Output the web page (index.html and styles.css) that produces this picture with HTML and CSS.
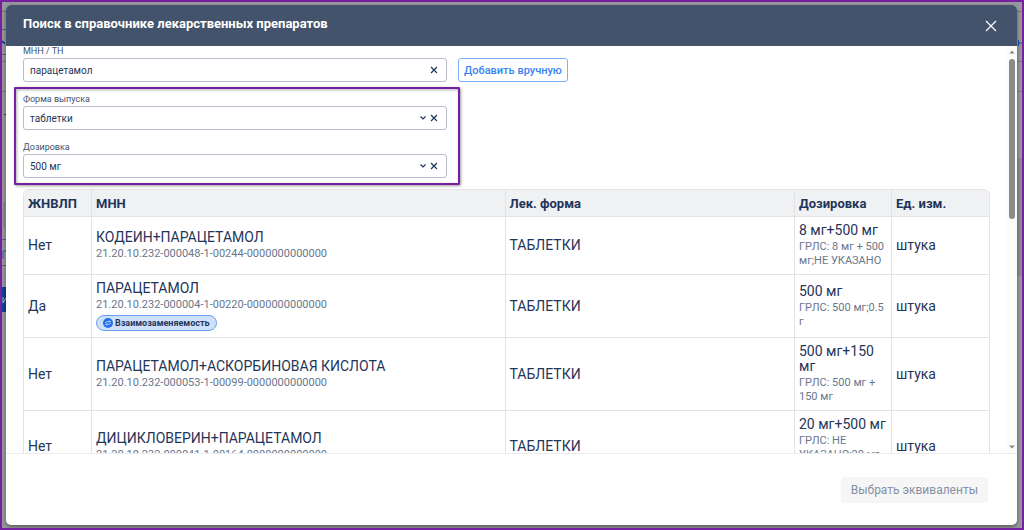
FILE: index.html
```html
<!DOCTYPE html>
<html lang="ru">
<head>
    <meta charset="utf-8">
    <meta name="viewport" content="width=device-width, initial-scale=1.0">
    <title>Поиск в справочнике лекарственных препаратов</title>
    <link rel="stylesheet" href="styles.css">
</head>
<body>
    <!-- края страницы под затемнением -->
    <svg class="page_edge page_edge_left" width="4" height="526" aria-hidden="true">
        <path d="M0 9.500H4M0 59.500H4M0 89.500H4" stroke="#77777c"/>
        <path d="M0 27.500H4M0 52.500H4M0 237.500H4M0 263.500H4" stroke="#4a6794"/>
        <path d="M0 39Q1 41 3 41" stroke="#1b4a9c" stroke-width="2" fill="none"/>
        <path d="M4 200.500H3Q2 201 2 203V223Q2 226 4 226" stroke="#77777c" fill="none"/>
        <path d="M2 112.500H4" stroke="#303a55"/>
        <path d="M1 257V249H4" stroke="#2b5da5" fill="none"/>
        <rect y="285" width="4" height="25" fill="#123f96"/>
        <path d="M1 295V301L4 296" stroke="#aab4c8" fill="none"/>
    </svg>
    <svg class="page_edge page_edge_right" width="5" height="526" aria-hidden="true">
        <path d="M0 9.500H5M0 59.500H5M0 89.500H5" stroke="#77777c"/>
        <path d="M1.500 38V44M1 41H5" stroke="#1b4a9c" stroke-width="1"/>
        <rect y="156" width="5" height="118" fill="#000" opacity="0.080"/>
    </svg>

    <div class="dialog" role="dialog" aria-labelledby="title">
        <header class="dialog_header">
            <h1 id="title">Поиск в справочнике лекарственных препаратов</h1>
            <button type="button" class="icon_button close" aria-label="Закрыть">
                <svg width="12" height="12" viewBox="0 0 12 12"><path d="M1 1L11 11M11 1L1 11"/></svg>
            </button>
        </header>

        <div class="dialog_body">
            <div class="content">
                <form class="filters">
                    <div class="search_row">
                        <div class="field">
                            <label for="mnn">МНН / ТН</label>
                            <div class="field_box">
                                <input type="text" id="mnn" value="парацетамол">
                                <button type="button" class="icon_button" aria-label="Очистить">
                                    <svg width="8" height="8" viewBox="0 0 8 8"><path d="M1 1L7 7M7 1L1 7"/></svg>
                                </button>
                            </div>
                        </div>
                        <button type="button" class="add_button">Добавить вручную</button>
                    </div>
                    <div class="highlight">
                        <div class="field">
                            <label for="form">Форма выпуска</label>
                            <div class="field_box">
                                <select id="form"><option>таблетки</option></select>
                                <svg class="chevron" width="6" height="4" viewBox="0 0 6 4"><path d="M0.500 0.500L3 3L5.500 0.500"/></svg>
                                <button type="button" class="icon_button" aria-label="Очистить">
                                    <svg width="8" height="8" viewBox="0 0 8 8"><path d="M1 1L7 7M7 1L1 7"/></svg>
                                </button>
                            </div>
                        </div>
                        <div class="field">
                            <label for="dose">Дозировка</label>
                            <div class="field_box">
                                <select id="dose"><option>500 мг</option></select>
                                <svg class="chevron" width="6" height="4" viewBox="0 0 6 4"><path d="M0.500 0.500L3 3L5.500 0.500"/></svg>
                                <button type="button" class="icon_button" aria-label="Очистить">
                                    <svg width="8" height="8" viewBox="0 0 8 8"><path d="M1 1L7 7M7 1L1 7"/></svg>
                                </button>
                            </div>
                        </div>
                    </div>
                </form>

                <table>
                    <thead>
                        <tr>
                            <th class="col_vital">ЖНВЛП</th>
                            <th>МНН</th>
                            <th class="col_form">Лек. форма</th>
                            <th class="col_dose">Дозировка</th>
                            <th class="col_unit">Ед. изм.</th>
                        </tr>
                    </thead>
                    <tbody>
                        <tr>
                            <td>Нет</td>
                            <td>КОДЕИН+ПАРАЦЕТАМОЛ<small>21.20.10.232-000048-1-00244-0000000000000</small></td>
                            <td>ТАБЛЕТКИ</td>
                            <td>8 мг+500 мг<small>ГРЛС: 8 мг + 500 мг;НЕ УКАЗАНО</small></td>
                            <td>штука</td>
                        </tr>
                        <tr>
                            <td>Да</td>
                            <td>ПАРАЦЕТАМОЛ<small>21.20.10.232-000004-1-00220-0000000000000</small>
                                <span class="badge">
                                    <svg width="10" height="10" viewBox="0 0 10 10">
                                        <circle cx="5" cy="5" r="5" fill="#1f6fee"/>
                                        <path d="M2.500 5Q3 3.700 4.300 3.700H7.500L6.300 2.600M7.500 5Q7 6.300 5.700 6.300H2.500L3.700 7.400" fill="none" stroke="#cfe0fb" stroke-width="0.900"/>
                                    </svg>
                                    Взаимозаменяемость
                                </span>
                            </td>
                            <td>ТАБЛЕТКИ</td>
                            <td>500 мг<small>ГРЛС: 500 мг;0.5 г</small></td>
                            <td>штука</td>
                        </tr>
                        <tr>
                            <td>Нет</td>
                            <td>ПАРАЦЕТАМОЛ+АСКОРБИНОВАЯ КИСЛОТА<small>21.20.10.232-000053-1-00099-0000000000000</small></td>
                            <td>ТАБЛЕТКИ</td>
                            <td>500 мг+150 мг<small>ГРЛС: 500 мг + 150 мг</small></td>
                            <td>штука</td>
                        </tr>
                        <tr>
                            <td>Нет</td>
                            <td>ДИЦИКЛОВЕРИН+ПАРАЦЕТАМОЛ<small>21.20.10.232-000041-1-00164-0000000000000</small></td>
                            <td>ТАБЛЕТКИ</td>
                            <td>20 мг+500 мг<small>ГРЛС: НЕ УКАЗАНО;20 мг + 500 мг</small></td>
                            <td>штука</td>
                        </tr>
                    </tbody>
                </table>
            </div>
            <div class="scrollbar" aria-hidden="true">
                <svg width="6" height="4" viewBox="0 0 6 4"><path d="M0.500 3.500L3 0.500L5.500 3.500Z"/></svg>
                <div class="track"><div class="thumb"></div></div>
                <svg width="6" height="4" viewBox="0 0 6 4"><path d="M0 0.500L3 3.500L6 0.500Z"/></svg>
            </div>
        </div>

        <footer class="dialog_footer">
            <button type="button" class="submit_button" disabled>Выбрать эквиваленты</button>
        </footer>
    </div>
</body>
</html>
```
FILE: styles.css
```css
* {
    box-sizing: border-box;
}
body {
    position: relative;
    display: flex;
    height: 100vh;
    margin: 0;
    padding: 3px 5px 3px 4px;
    border: 2px solid #761fa0;
    background-color: #98989b;
    color: #1f3559;
    font-family: Roboto, "Liberation Sans", sans-serif;
    font-size: 14px;
    overflow: hidden;
}
button, input, select {
    font-family: inherit;
    color: inherit;
}
.page_edge {
    position: absolute;
    top: 0;
}
.page_edge_left {
    left: 0;
}
.page_edge_right {
    right: 0;
}
.dialog {
    position: relative;
    display: flex;
    flex: 1;
    flex-direction: column;
    min-width: 0;
    border-radius: 5px;
    background-color: #fff;
    box-shadow: 0 2px 4px rgba(0, 0, 0, 0.4);
    overflow: hidden;
}
.dialog_header {
    display: flex;
    justify-content: space-between;
    align-items: center;
    height: 41px;
    padding: 0 20px 0 17px;
    background-color: #44536c;
    color: #fff;
}
.dialog_header h1 {
    margin: 0;
    padding-bottom: 4px;
    font-size: 13px;
    font-weight: 700;
}
.icon_button {
    display: flex;
    padding: 0;
    border: none;
    background: none;
    cursor: pointer;
}
.icon_button path, .chevron path {
    fill: none;
    stroke: currentColor;
    stroke-width: 1.2;
}
.dialog_body {
    display: flex;
    flex: 1;
    min-height: 0;
}
.content {
    flex: 1;
    min-width: 0;
    padding: 0 17px;
    overflow-y: auto;
    scrollbar-width: none;
}
.filters {
    margin-bottom: 11px;
}
.search_row {
    display: flex;
    align-items: flex-end;
    gap: 11px;
    margin-bottom: 12px;
}
.field {
    flex: 0 1 424px;
    max-width: 424px;
}
.field label {
    display: block;
    margin-bottom: 2px;
    color: #44536c;
    font-size: 9px;
    line-height: 10px;
}
.field_box {
    display: flex;
    align-items: center;
    gap: 4px;
    height: 24px;
    padding: 0 8px 0 6px;
    border: 1px solid #b7bdca;
    border-radius: 3px;
}
.field_box input, .field_box select {
    flex: 1;
    min-width: 0;
    padding: 0;
    border: none;
    outline: none;
    background: none;
    font-size: 10px;
    appearance: none;
}
.add_button {
    height: 24px;
    padding: 0 5px;
    border: 1px solid #7fb0fa;
    border-radius: 3px;
    background-color: #fff;
    color: #3883f3;
    font-size: 11px;
    font-weight: 500;
    cursor: pointer;
}
.highlight {
    position: relative;
    display: flex;
    flex-direction: column;
    gap: 12px;
    max-width: 424px;
}
.highlight .field {
    flex: none;
}
.highlight::after {
    content: "";
    position: absolute;
    inset: -7px -13px -7px -9px;
    border: 2px solid #761fa0;
    border-radius: 1px;
    box-shadow: 1px 1px 3px rgba(0, 0, 0, 0.4), inset 1px 1px 3px rgba(0, 0, 0, 0.3);
    pointer-events: none;
}
table {
    width: 100%;
    table-layout: fixed;
    border: 1px solid #e2e3e8;
    border-radius: 6px;
    border-collapse: separate;
    border-spacing: 0;
    overflow: hidden;
}
th, td {
    padding: 6px 4px;
    border-right: 1px solid #e2e3e8;
    border-bottom: 1px solid #e2e3e8;
    line-height: 15px;
    text-align: left;
    vertical-align: middle;
}
th:last-child, td:last-child {
    border-right: none;
}
th {
    padding: 6px 4px 5px;
    background-color: #f0f1f3;
    font-size: 13px;
    font-weight: 700;
}
.col_vital {
    width: 68px;
}
.col_form {
    width: 30%;
}
.col_dose {
    width: 97px;
}
.col_unit {
    width: 97px;
}
small {
    display: block;
    margin-top: 2px;
    color: #69768c;
    font-size: 11px;
    line-height: 14px;
}
.badge {
    display: flex;
    align-items: center;
    gap: 2px;
    width: max-content;
    height: 16px;
    margin-top: 3px;
    padding: 0 6px;
    border: 1px solid #67a0f5;
    border-radius: 8px;
    background-color: #cfe0fb;
    font-size: 9px;
    font-weight: 700;
}
.scrollbar {
    display: flex;
    flex-direction: column;
    align-items: center;
    gap: 5px;
    width: 10px;
    padding: 4px 0;
    background-color: #fbfbfb;
}
.scrollbar path {
    fill: #858585;
}
.track {
    flex: 1;
}
.thumb {
    width: 6px;
    height: 42%;
    border-radius: 3px;
    background-color: #8a8a8a;
}
.dialog_footer {
    display: flex;
    justify-content: flex-end;
    align-items: center;
    height: 72px;
    padding: 0 29px 0 17px;
    border-top: 1px solid #ececef;
}
.submit_button {
    height: 26px;
    padding: 0 10px;
    border: none;
    border-radius: 3px;
    background-color: #f6f6f7;
    color: #8590a2;
    font-size: 12px;
}
```
